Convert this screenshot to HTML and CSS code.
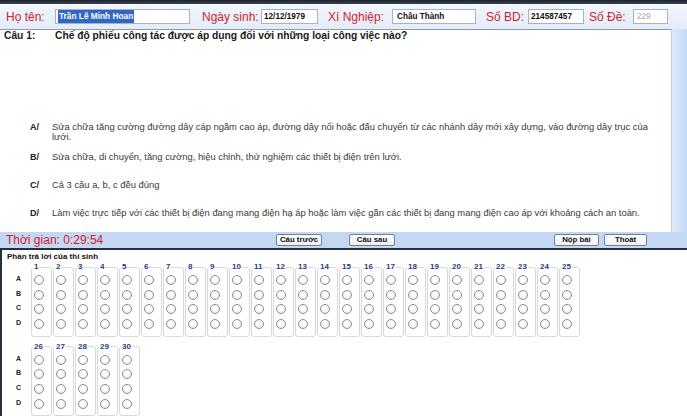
FILE: index.html
```html
<!DOCTYPE html>
<html lang="vi">
<head>
<meta charset="utf-8">
<title>Thi trắc nghiệm</title>
<link rel="stylesheet" href="styles.css">
</head>
<body>
<div class="app">
  <div class="topline"></div>
  <div class="header">
    <label class="lbl lbl-name">Họ tên:</label>
    <div class="inp inp-name"><span class="sel">Trần Lê Minh Hoan</span></div>
    <label class="lbl lbl-dob">Ngày sinh:</label>
    <div class="inp inp-dob">12/12/1979</div>
    <label class="lbl lbl-xn">Xí Nghiệp:</label>
    <div class="inp inp-xn">Châu Thành</div>
    <label class="lbl lbl-sbd">Số BD:</label>
    <div class="inp inp-sbd">214587457</div>
    <label class="lbl lbl-de">Số Đề:</label>
    <div class="inp inp-de">229</div>
  </div>
  <div class="main">
    <div class="panel">
      <div class="question">
        <span class="qno">Câu 1:</span>
        <span class="qtext">Chế độ phiếu công tác được áp dụng đối với những loại công việc nào?</span>
      </div>
      <div class="options">
        <div class="opt"><span class="ol">A/</span><span class="ot">Sửa chữa tăng cường đường dây cáp ngầm cao áp, đường dây nổi hoặc đấu chuyển từ các nhánh dây mới xây dựng, vào đường dây trục của<br>lưới.</span></div>
        <div class="opt"><span class="ol">B/</span><span class="ot">Sửa chữa, di chuyển, tăng cường, hiệu chỉnh, thử nghiệm các thiết bị điện trên lưới.</span></div>
        <div class="opt"><span class="ol">C/</span><span class="ot">Cả 3 câu a, b, c đều đúng</span></div>
        <div class="opt"><span class="ol">D/</span><span class="ot">Làm việc trực tiếp với các thiết bị điện đang mang điện hạ áp hoặc làm việc gần các thiết bị đang mang điện cao áp với khoảng cách an toàn.</span></div>
      </div>
    </div>
    <div class="side"></div>
  </div>
  <div class="footer">
    <div class="timer">Thời gian: 0:29:54</div>
    <button class="btn btn-prev">Câu trước</button>
    <button class="btn btn-next">Câu sau</button>
    <button class="btn btn-submit">Nộp bài</button>
    <button class="btn btn-exit">Thoát</button>
  </div>
  <div class="answers">
    <div class="atitle">Phần trả lời của thí sinh</div>
    <div class="block">
      <div class="rowlabels"><span>A</span><span>B</span><span>C</span><span>D</span></div>
      <fieldset class="q"><legend>1</legend><i></i><i></i><i></i><i></i></fieldset>
      <fieldset class="q"><legend>2</legend><i></i><i></i><i></i><i></i></fieldset>
      <fieldset class="q"><legend>3</legend><i></i><i></i><i></i><i></i></fieldset>
      <fieldset class="q"><legend>4</legend><i></i><i></i><i></i><i></i></fieldset>
      <fieldset class="q"><legend>5</legend><i></i><i></i><i></i><i></i></fieldset>
      <fieldset class="q"><legend>6</legend><i></i><i></i><i></i><i></i></fieldset>
      <fieldset class="q"><legend>7</legend><i></i><i></i><i></i><i></i></fieldset>
      <fieldset class="q"><legend>8</legend><i></i><i></i><i></i><i></i></fieldset>
      <fieldset class="q"><legend>9</legend><i></i><i></i><i></i><i></i></fieldset>
      <fieldset class="q"><legend>10</legend><i></i><i></i><i></i><i></i></fieldset>
      <fieldset class="q"><legend>11</legend><i></i><i></i><i></i><i></i></fieldset>
      <fieldset class="q"><legend>12</legend><i></i><i></i><i></i><i></i></fieldset>
      <fieldset class="q"><legend>13</legend><i></i><i></i><i></i><i></i></fieldset>
      <fieldset class="q"><legend>14</legend><i></i><i></i><i></i><i></i></fieldset>
      <fieldset class="q"><legend>15</legend><i></i><i></i><i></i><i></i></fieldset>
      <fieldset class="q"><legend>16</legend><i></i><i></i><i></i><i></i></fieldset>
      <fieldset class="q"><legend>17</legend><i></i><i></i><i></i><i></i></fieldset>
      <fieldset class="q"><legend>18</legend><i></i><i></i><i></i><i></i></fieldset>
      <fieldset class="q"><legend>19</legend><i></i><i></i><i></i><i></i></fieldset>
      <fieldset class="q"><legend>20</legend><i></i><i></i><i></i><i></i></fieldset>
      <fieldset class="q"><legend>21</legend><i></i><i></i><i></i><i></i></fieldset>
      <fieldset class="q"><legend>22</legend><i></i><i></i><i></i><i></i></fieldset>
      <fieldset class="q"><legend>23</legend><i></i><i></i><i></i><i></i></fieldset>
      <fieldset class="q"><legend>24</legend><i></i><i></i><i></i><i></i></fieldset>
      <fieldset class="q"><legend>25</legend><i></i><i></i><i></i><i></i></fieldset>
    </div>
    <div class="block block2">
      <div class="rowlabels"><span>A</span><span>B</span><span>C</span><span>D</span></div>
      <fieldset class="q"><legend>26</legend><i></i><i></i><i></i><i></i></fieldset>
      <fieldset class="q"><legend>27</legend><i></i><i></i><i></i><i></i></fieldset>
      <fieldset class="q"><legend>28</legend><i></i><i></i><i></i><i></i></fieldset>
      <fieldset class="q"><legend>29</legend><i></i><i></i><i></i><i></i></fieldset>
      <fieldset class="q"><legend>30</legend><i></i><i></i><i></i><i></i></fieldset>
    </div>
  </div>
</div>
</body>
</html>
```

FILE: styles.css
```css
* { box-sizing: border-box; }
html, body { margin: 0; padding: 0; }
body {
  width: 687px;
  height: 416px;
  overflow: hidden;
  background: #fff;
  font-family: "Liberation Sans", Arial, sans-serif;
}
.app { width: 687px; height: 416px; display: flex; flex-direction: column; }
.app > * { flex-shrink: 0; }

.topline {
  height: 4px;
  background: linear-gradient(#1c222c, #3a4250);
}

.header {
  height: 25px;
  display: flex;
  align-items: center;
  background: linear-gradient(#f2f6fd, #e3ecf9);
  padding-left: 6px;
}
.lbl {
  color: #d01e2a;
  font-size: 12px;
  white-space: nowrap;
}
.lbl-name { width: 49px; }
.lbl-dob { width: 59px; margin-left: 12px; }
.lbl-xn { width: 64px; margin-left: 10px; }
.lbl-sbd { width: 42px; margin-left: 10px; }
.lbl-de { width: 44px; margin-left: 5px; }
.inp {
  height: 15px;
  background: #fff;
  border: 1px solid #a5b3c6;
  font-size: 8.2px;
  font-weight: bold;
  color: #111;
  line-height: 13px;
  padding-left: 2px;
  white-space: nowrap;
  overflow: hidden;
}
.inp-name { width: 135px; font-size: 8.3px; }
.inp-dob { width: 57px; }
.inp-xn { width: 84px; padding-left: 4px; }
.inp-sbd { width: 56px; }
.inp-de { width: 35px; color: #a8a8a8; font-weight: normal; padding-left: 3px; }
.sel {
  display: inline-block;
  background: #3266c4;
  color: #fff;
  padding: 0 1px;
  line-height: 13px;
  vertical-align: top;
}

.main {
  height: 203px;
  display: flex;
}
.panel {
  width: 672px;
  background: #fff;
  border-top: 1px solid #8e98a6;
  border-right: 1px solid #c4cfdd;
  padding: 0 0 0 4px;
}
.side {
  flex: 1;
  background: linear-gradient(90deg, #dde9fa, #c6daf6);
}
.question {
  display: flex;
  font-size: 10.25px;
  font-weight: bold;
  color: #1a1a1a;
  line-height: 12px;
}
.qno { width: 51px; }
.options {
  margin-top: 80px;
  padding-left: 26px;
  display: grid;
  grid-template-rows: 30px 28px 28px 28px;
}
.opt { display: flex; align-items: baseline; line-height: 9.5px; }
.ol {
  width: 22px;
  font-size: 9px;
  font-weight: bold;
  color: #222;
}
.ot {
  font-size: 9.4px;
  color: #3a3a3a;
  white-space: nowrap;
}

.footer {
  display: flex;
  align-items: center;
  background: #c5d8f3;
  border-bottom: 2px solid #2a303a;
  height: 18px;
  padding-left: 6px;
}
.timer {
  width: 270px;
  color: #d01e2a;
  font-size: 12px;
  white-space: nowrap;
}
.btn {
  height: 12px;
  padding: 0;
  border: 1px solid #6f7f94;
  border-radius: 2px;
  background: linear-gradient(#ffffff, #eef1f5);
  font-family: "Liberation Sans", Arial, sans-serif;
  font-size: 7.8px;
  font-weight: bold;
  color: #111;
  line-height: 10px;
}
.btn-prev { width: 46px; }
.btn-next { width: 46px; margin-left: 27px; }
.btn-submit { width: 45px; margin-left: auto; }
.btn-exit { width: 43px; margin-left: 5px; margin-right: 40px; }

.answers {
  flex: 1 1 auto;
  min-height: 0;
  overflow: hidden;
  background: #fff;
  border-left: 2px solid #2a303a;
  padding: 2px 0 0 5px;
}
.atitle {
  font-size: 8px;
  font-weight: bold;
  color: #111;
  line-height: 10px;
}
.block {
  display: flex;
  gap: 1px;
  margin-top: 1px;
  padding-left: 9px;
}
.block2 { margin-top: 6px; }
.rowlabels {
  width: 14px;
  padding-top: 9px;
  display: flex;
  flex-direction: column;
}
.rowlabels span {
  height: 14.67px;
  line-height: 14.67px;
  font-size: 7px;
  font-weight: bold;
  color: #222;
}
fieldset.q {
  width: 21px;
  margin: 0;
  padding: 1px 0 5px 0;
  border: 1px solid #d8d8d8;
  border-radius: 3px;
  display: flex;
  flex-direction: column;
  min-width: 0;
}
fieldset.q legend {
  font-size: 8px;
  font-weight: bold;
  color: #23408c;
  line-height: 8px;
  padding: 0 1px;
  margin-left: 1px;
}
fieldset.q i {
  display: block;
  height: 14.67px;
}
fieldset.q i::before {
  content: "";
  display: block;
  width: 8px;
  height: 8px;
  margin: 3px 0 0 2px;
  border: 1px solid #8d8d8d;
  border-radius: 50%;
  background: radial-gradient(circle at 50% 40%, #ffffff 30%, #e4e4e4 100%);
}
```
